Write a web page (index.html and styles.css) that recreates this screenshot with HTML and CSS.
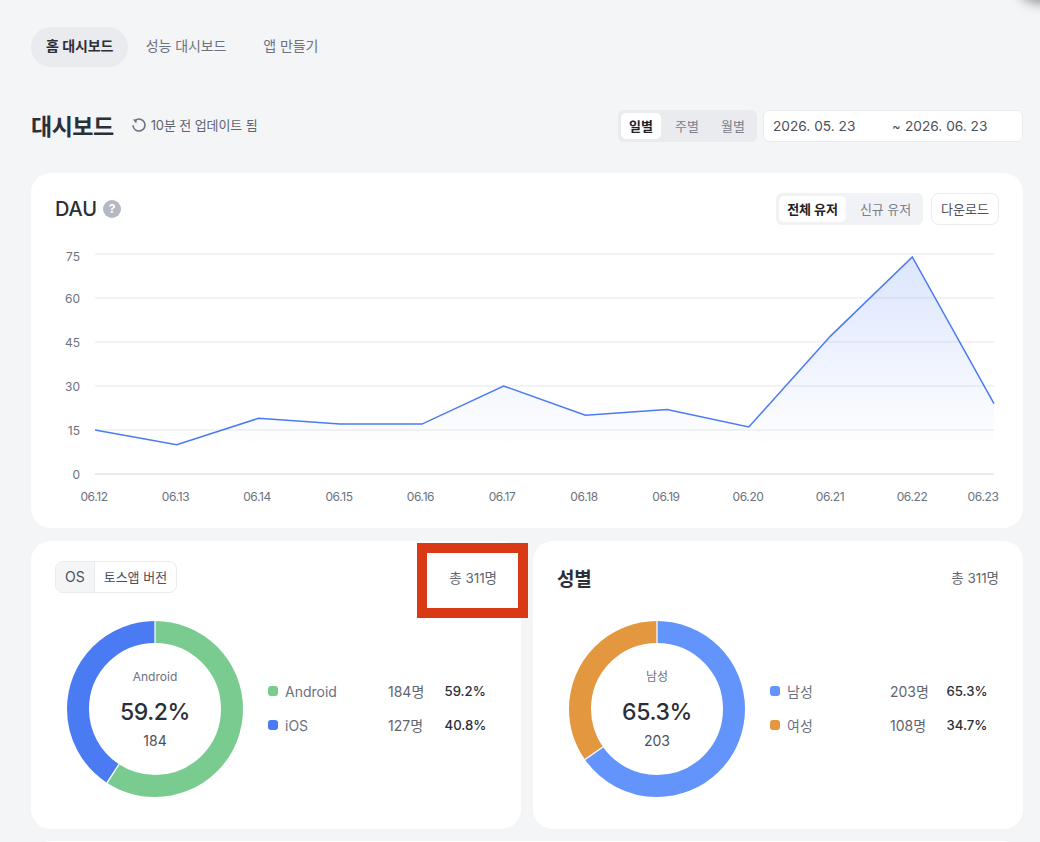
FILE: index.html
```html
<!DOCTYPE html>
<html lang="ko">
<head>
    <meta charset="UTF-8">
    <title>대시보드</title>
    <link rel="stylesheet" href="styles.css">
</head>
<body>
    <div class="corner-shadow"></div>
    <div class="page">
        <ul class="tabs">
            <li class="tab on">홈 대시보드</li>
            <li class="tab">성능 대시보드</li>
            <li class="tab">앱 만들기</li>
        </ul>

        <div class="head">
            <h1>대시보드</h1>
            <div class="updated">
                <svg width="16" height="16" viewBox="0 0 16 16" fill="none">
                    <path d="M4.2 3.4A6 6 0 1 1 2 8.2" stroke="#6b7280" stroke-width="1.6"/>
                    <path d="M1.800 2.400 L6 2.400 L5.200 6.400 Z" fill="#6b7280"/>
                </svg>
                <span>10분 전 업데이트 됨</span>
            </div>
            <div class="filters">
                <ul class="seg seg-date">
                    <li class="on">일별</li>
                    <li>주별</li>
                    <li>월별</li>
                </ul>
                <div class="range">
                    <span class="range-from">2026. 05. 23</span>
                    <span class="range-til">~</span>
                    <span>2026. 06. 23</span>
                </div>
            </div>
        </div>

        <div class="card card-dau">
            <div class="card-top">
                <div class="title-wrap">
                    <h2 class="en">DAU</h2>
                    <span class="help">?</span>
                </div>
                <div class="actions">
                    <ul class="seg seg-user">
                        <li class="on">전체 유저</li>
                        <li>신규 유저</li>
                    </ul>
                    <div class="btn-down">다운로드</div>
                </div>
            </div>
            <svg class="chart" width="992" height="286" viewBox="31 233 992 286">
                <defs>
                    <linearGradient id="fade" gradientUnits="userSpaceOnUse" x1="0" y1="254" x2="0" y2="448">
                        <stop offset="0" stop-color="#4a7bf2" stop-opacity="0.2"/>
                        <stop offset="1" stop-color="#4a7bf2" stop-opacity="0"/>
                    </linearGradient>
                </defs>
                <g class="grid">
                    <line x1="95" x2="994" y1="254" y2="254"/>
                    <line x1="95" x2="994" y1="298" y2="298"/>
                    <line x1="95" x2="994" y1="342" y2="342"/>
                    <line x1="95" x2="994" y1="386" y2="386"/>
                    <line x1="95" x2="994" y1="430" y2="430"/>
                    <line class="base" x1="95" x2="994" y1="474" y2="474"/>
                </g>
                <polygon fill="url(#fade)" points="95,474 95,430 176.7,444.7 258.5,418.3 340.2,424.1 421.9,424.1 503.6,386 585.4,415.3 667.1,409.5 748.8,427 830.5,336.1 912.3,257 994,403.6 994,474"/>
                <polyline class="line" points="95,430 176.7,444.7 258.5,418.3 340.2,424.1 421.9,424.1 503.6,386 585.4,415.3 667.1,409.5 748.8,427 830.5,336.1 912.3,257 994,403.6"/>
                <g class="ylab">
                    <text x="80" y="261">75</text>
                    <text x="80" y="303">60</text>
                    <text x="80" y="347">45</text>
                    <text x="80" y="391">30</text>
                    <text x="80" y="435">15</text>
                    <text x="80" y="479">0</text>
                </g>
                <g class="xlab">
                    <text x="94" y="501">06.12</text>
                    <text x="175.500" y="501">06.13</text>
                    <text x="257" y="501">06.14</text>
                    <text x="339" y="501">06.15</text>
                    <text x="420.500" y="501">06.16</text>
                    <text x="502" y="501">06.17</text>
                    <text x="584" y="501">06.18</text>
                    <text x="666" y="501">06.19</text>
                    <text x="748" y="501">06.20</text>
                    <text x="830" y="501">06.21</text>
                    <text x="912" y="501">06.22</text>
                    <text x="983" y="501">06.23</text>
                </g>
            </svg>
        </div>

        <div class="row">
            <div class="card card-pie">
                <div class="card-top">
                    <ul class="tabs-box">
                        <li class="on">OS</li>
                        <li>토스앱 버전</li>
                    </ul>
                    <span class="total">총 311명</span>
                </div>
                <div class="pie-body">
                    <div class="donut">
                        <svg width="176" height="176" viewBox="0 0 176 176">
                            <circle class="ring" cx="88" cy="88" r="77" stroke="#7acb90" stroke-dasharray="286.4 483.8"/>
                            <circle class="ring" cx="88" cy="88" r="77" stroke="#4a7bf2" stroke-dasharray="197.4 483.8" stroke-dashoffset="-286.4"/>
                            <path class="cut" d="M88 0V22M40 161.800L52 143.400"/>
                        </svg>
                        <div class="donut-mid">
                            <span class="mid-name">Android</span>
                            <span class="mid-pct">59.2%</span>
                            <span class="mid-num">184</span>
                        </div>
                    </div>
                    <div class="legend">
                        <div class="leg-row">
                            <i class="dot green"></i><span class="leg-name">Android</span>
                            <span class="leg-num">184명</span><span class="leg-pct">59.2%</span>
                        </div>
                        <div class="leg-row">
                            <i class="dot blue"></i><span class="leg-name">iOS</span>
                            <span class="leg-num">127명</span><span class="leg-pct">40.8%</span>
                        </div>
                    </div>
                </div>
            </div>

            <div class="card card-pie">
                <div class="card-top">
                    <h2>성별</h2>
                    <span class="total">총 311명</span>
                </div>
                <div class="pie-body">
                    <div class="donut">
                        <svg width="176" height="176" viewBox="0 0 176 176">
                            <circle class="ring" cx="88" cy="88" r="77" stroke="#6394fb" stroke-dasharray="315.9 483.8"/>
                            <circle class="ring" cx="88" cy="88" r="77" stroke="#e3973e" stroke-dasharray="167.9 483.8" stroke-dashoffset="-315.9"/>
                            <path class="cut" d="M88 0V22M16 138.500L34 125.900"/>
                        </svg>
                        <div class="donut-mid">
                            <span class="mid-name">남성</span>
                            <span class="mid-pct">65.3%</span>
                            <span class="mid-num">203</span>
                        </div>
                    </div>
                    <div class="legend">
                        <div class="leg-row">
                            <i class="dot sky"></i><span class="leg-name">남성</span>
                            <span class="leg-num">203명</span><span class="leg-pct">65.3%</span>
                        </div>
                        <div class="leg-row">
                            <i class="dot orange"></i><span class="leg-name">여성</span>
                            <span class="leg-num">108명</span><span class="leg-pct">34.7%</span>
                        </div>
                    </div>
                </div>
            </div>
        </div>

        <div class="card card-next"></div>
    </div>
    <div class="mark"></div>
</body>
</html>
```

FILE: styles.css
```css
*{
    margin: 0;
    padding: 0;
    list-style: none;
    box-sizing: border-box;
}
html,body{
    height: 842px;
    overflow: hidden;
}
body{
    position: relative;
    background-color: #f4f5f7;
    font-family: Inter, "Noto Sans CJK KR", sans-serif;
    color: #2b2f38;
}
.page{
    padding: 27px 17px 0 31px;
}

/* top tabs */
.tabs{
    display: flex;
    height: 40px;
}
.tab{
    padding: 0 14.5px;
    line-height: 38px;
    border-radius: 20px;
    font-size: 14px;
    letter-spacing: -0.1px;
    color: #6b7280;
    margin-right: 8px;
}
.tab.on{
    height: 40px;
    padding: 0 15px;
    background-color: #e9ebef;
    color: #2b2f38;
    font-weight: 600;
    margin-right: 3px;
}

/* page head */
.head{
    display: flex;
    align-items: center;
    height: 32px;
    margin-top: 43px;
}
h1{
    padding-bottom: 3px;
    font-size: 23px;
    font-weight: 700;
    letter-spacing: -0.5px;
    color: #2b2f38;
}
.updated{
    display: flex;
    align-items: center;
    gap: 4px;
    margin-left: 17px;
    padding-bottom: 3px;
    font-size: 13px;
    letter-spacing: -0.1px;
    color: #5f6570;
}
.filters{
    display: flex;
    gap: 6px;
    margin-left: auto;
}
.seg{
    display: flex;
    padding: 3px;
    border-radius: 6px;
    background-color: #e9ebef;
    font-size: 13px;
    color: #7a808b;
}
.seg li{
    height: 26px;
    line-height: 26px;
    padding: 0 8px;
    border-radius: 5px;
    text-align: center;
}
.seg .on{
    background-color: #fff;
    color: #1f2228;
    font-weight: 600;
}
.seg-date{
    width: 139px;
    gap: 6px;
}
.seg-date li{
    width: 40px;
    padding: 0;
}
.range{
    display: flex;
    align-items: center;
    width: 260px;
    height: 32px;
    padding-left: 9px;
    background-color: #fff;
    border: 1px solid #e9ebef;
    border-radius: 6px;
    font-size: 13.7px;
    color: #4b505a;
}
.range-from{
    width: 119px;
}
.range-til{
    width: 13px;
    font-size: 13px;
}

/* cards */
.card{
    background-color: #fff;
    border-radius: 20px;
}
.card-top{
    display: flex;
    align-items: center;
    justify-content: space-between;
    height: 32px;
}
h2{
    font-size: 19px;
    font-weight: 600;
    letter-spacing: -0.2px;
    color: #2b2f38;
}
h2.en{
    font-size: 20px;
    font-weight: 500;
    letter-spacing: -0.1px;
}
.card-dau{
    height: 355px;
    margin-top: 31px;
    padding-top: 20px;
}
.card-dau .card-top{
    padding: 0 24px;
}
.title-wrap{
    display: flex;
    align-items: center;
    gap: 6px;
}
.help{
    width: 18px;
    height: 18px;
    border-radius: 50%;
    background-color: #b3b8c2;
    color: #fff;
    font-size: 12px;
    font-weight: 700;
    line-height: 18px;
    text-align: center;
}
.actions{
    display: flex;
    gap: 8px;
}
.seg-user{
    background-color: #f1f2f5;
}
.seg-user li{
    width: 67px;
    padding: 0;
    letter-spacing: -0.1px;
}
.seg-user li + li{
    width: 74px;
    padding-left: 5px;
}
.btn-down{
    width: 68px;
    height: 32px;
    line-height: 30px;
    text-align: center;
    border: 1px solid #e9ebef;
    border-radius: 8px;
    font-size: 13px;
    color: #4b505a;
}

/* chart */
.chart{
    display: block;
    margin-top: 8px;
}
.grid line{
    stroke: #f2f3f5;
    stroke-width: 2;
}
.grid .base{
    stroke: #e9ebef;
}
.line{
    fill: none;
    stroke: #4a7bf2;
    stroke-width: 1.5;
}
.ylab text,.xlab text{
    font-size: 12px;
    fill: #6b7280;
}
.ylab text{
    text-anchor: end;
}
.xlab text{
    text-anchor: middle;
    letter-spacing: -0.4px;
}

/* bottom row */
.row{
    display: flex;
    gap: 12px;
    margin-top: 13px;
}
.card-pie{
    flex: 1;
    height: 288px;
    padding: 20px 24px 0;
}
.tabs-box{
    display: flex;
    height: 32px;
    border: 1px solid #e9ebef;
    border-radius: 8px;
    overflow: hidden;
    font-size: 13px;
    line-height: 30px;
    color: #4b505a;
}
.tabs-box li{
    padding: 0 9px;
}
.tabs-box .on{
    background-color: #f4f5f7;
    border-right: 1px solid #e9ebef;
    font-size: 14px;
}
.total{
    font-size: 13.5px;
    letter-spacing: -0.05px;
    color: #5f6570;
}
.pie-body{
    display: flex;
    align-items: center;
    margin-top: 28px;
    padding-left: 12px;
}
.donut{
    position: relative;
    width: 176px;
    height: 176px;
}
.donut svg{
    display: block;
}
.ring{
    fill: none;
    stroke-width: 22;
    transform: rotate(-90deg);
    transform-origin: 88px 88px;
}
.cut{
    stroke: #fff;
    stroke-width: 1.2;
}
.donut-mid{
    position: absolute;
    left: 0;
    right: 0;
    top: 48px;
    display: flex;
    flex-direction: column;
    align-items: center;
}
.mid-name{
    font-size: 12px;
    line-height: 16px;
    color: #6b7280;
}
.mid-pct{
    margin-top: 12px;
    font-size: 23px;
    font-weight: 500;
    letter-spacing: -0.4px;
    line-height: 30px;
    color: #2b2f38;
}
.mid-num{
    margin-top: 5px;
    font-size: 14px;
    line-height: 18px;
    color: #4b505a;
}
.legend{
    display: flex;
    flex-direction: column;
    gap: 14px;
    margin-left: 25px;
    padding-bottom: 2px;
}
.leg-row{
    display: flex;
    align-items: center;
    height: 20px;
    font-size: 14px;
    color: #6b7280;
}
.dot{
    width: 10px;
    height: 10px;
    border-radius: 3px;
    margin-right: 7px;
}
.green{ background-color: #7acb90; }
.blue{ background-color: #4a7bf2; }
.sky{ background-color: #6394fb; }
.orange{ background-color: #e3973e; }
.leg-name{
    width: 103px;
}
.leg-num{
    width: 56.5px;
    color: #5f6570;
}
.leg-pct{
    font-size: 13.2px;
    font-weight: 500;
    color: #2b2f38;
}

.card-next{
    height: 40px;
    margin-top: 12px;
}

/* annotation box over the first total */
.mark{
    position: absolute;
    left: 417px;
    top: 543px;
    width: 111px;
    height: 75px;
    border: 10px solid #d93a15;
}
.corner-shadow{
    position: absolute;
    right: -30px;
    top: -20px;
    width: 50px;
    height: 24px;
    border-radius: 50%;
    background-color: #999;
    filter: blur(6px);
}
```
